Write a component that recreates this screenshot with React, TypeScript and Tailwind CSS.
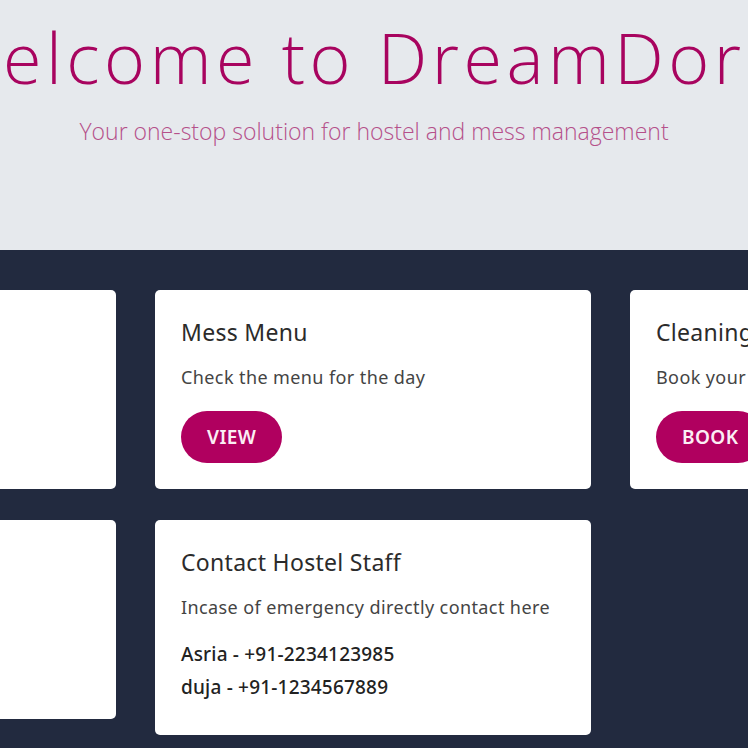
import React from "react";

type Card = {
  title: string;
  desc: string;
  button?: string;
  contacts?: string[];
};

const row1: Card[] = [
  { title: "Room Allocation", desc: "Check your allotted room", button: "VIEW" },
  { title: "Mess Menu", desc: "Check the menu for the day", button: "VIEW" },
  { title: "Cleaning Service", desc: "Book your cleaning slot", button: "BOOK" },
];

const row2: Card[] = [
  { title: "Complaints", desc: "Raise a complaint here", button: "RAISE" },
  {
    title: "Contact Hostel Staff",
    desc: "Incase of emergency directly contact here",
    contacts: ["Asria - +91-2234123985", "duja - +91-1234567889"],
  },
];

function CardBox({ c }: { c: Card }) {
  return (
    <div
      className={
        c.contacts
          ? "bg-white rounded-[5px] px-[26px] pt-[26px] pb-[34px] min-h-[199px]"
          : "bg-white rounded-[5px] px-[26px] pt-[26px] pb-[26px] min-h-[199px]"
      }
    >
      <h3 className="text-[23px] leading-[32px] tracking-[0.3px] text-[#2b2b2b] font-normal">{c.title}</h3>
      <p className="mt-[16px] text-[18px] leading-[27px] tracking-[0.4px] text-[#444]">{c.desc}</p>
      {c.button && (
        <button className="mt-[20px] h-[52px] px-[26px] rounded-full bg-[#b0005f] text-[#fbeef4] text-[19px] tracking-[0.4px] font-semibold">
          {c.button}
        </button>
      )}
      {c.contacts && (
        <div className="mt-[20px] flex flex-col gap-[6px]">
          {c.contacts.map((t) => (
            <p key={t} className="text-[19px] leading-[27px] tracking-[0.2px] font-medium text-[#222]">
              {t}
            </p>
          ))}
        </div>
      )}
    </div>
  );
}

export default function App() {
  return (
    <div className="w-[748px] h-[748px] overflow-hidden" style={{ fontFamily: '"Noto Sans", "Open Sans", sans-serif' }}>
      <div className="h-[250px] bg-[#e6e9ed] flex flex-col items-center">
        <div className="w-full flex justify-center pt-[15px]">
          <h1
            className="shrink-0 whitespace-nowrap text-[70px] leading-[84px] tracking-[4.5px] text-[#a8045f] font-light"
            style={{ fontFamily: '"Open Sans", sans-serif' }}
          >
            Welcome to DreamDorm
          </h1>
        </div>
        <p
          className="mt-[17px] text-[23px] leading-[30px] text-[#b5508a] font-light whitespace-nowrap"
          style={{ fontFamily: '"Open Sans", sans-serif' }}
        >
          Your one-stop solution for hostel and mess management
        </p>
      </div>
      <div className="bg-[#222a3f] h-[498px] flex justify-center pt-[40px]">
        <div className="shrink-0 w-[1388px] flex flex-col gap-[31px]">
          <div className="grid grid-cols-[436px_436px_436px] gap-x-[39px] items-start">
            {row1.map((c) => (
              <CardBox key={c.title} c={c} />
            ))}
          </div>
          <div className="grid grid-cols-[436px_436px_436px] gap-x-[39px] items-start">
            {row2.map((c) => (
              <CardBox key={c.title} c={c} />
            ))}
          </div>
        </div>
      </div>
    </div>
  );
}
